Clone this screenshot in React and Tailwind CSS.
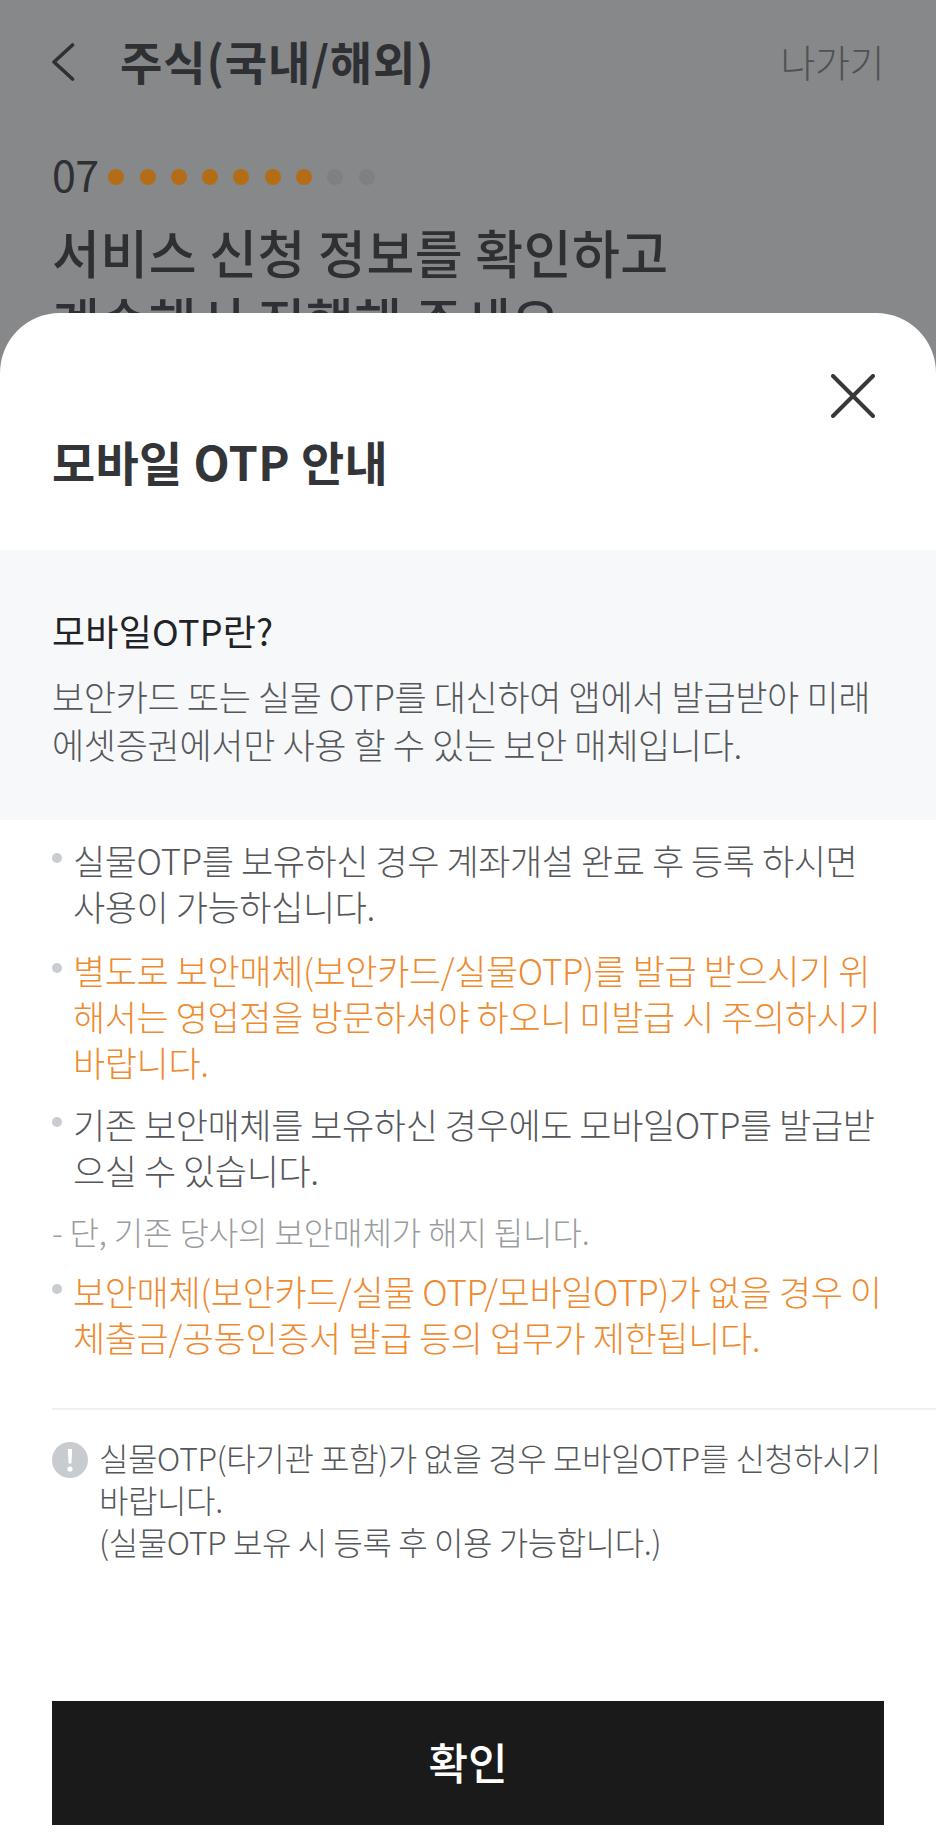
const font = "font-['Noto_Sans_CJK_KR','Noto_Sans',sans-serif]";

function Dot({ on }) {
  return <span className={`h-4 w-4 rounded-full ${on ? "bg-[#b46d17]" : "bg-[#7f8082]"}`} />;
}

function Bullet({ orange, children, className = "" }) {
  return (
    <div className={`flex ${className}`}>
      <span className="mt-[16px] mr-[11px] h-[10px] w-[10px] shrink-0 rounded-full bg-[#c9ccd0]" />
      <p className={`whitespace-nowrap text-[35px] leading-[46px] font-light tracking-[-0.4px] ${orange ? "text-[#ee8a30]" : "text-[#55575b]"}`}>
        {children}
      </p>
    </div>
  );
}

export default function App() {
  return (
    <div className={`relative h-[1847px] w-[936px] overflow-hidden bg-[#87888a] ${font}`}>
      {/* page behind, already dimmed by the sheet */}
      <div className="px-[52px] pt-[34px] text-[#2e3033]">
        <header className="flex h-[56px] items-center justify-between">
          <div className="flex items-center">
            <svg width="24" height="40" viewBox="0 0 24 40" fill="none" stroke="#2e3033" strokeWidth="3.6" strokeLinecap="round" strokeLinejoin="round">
              <path d="M20.5 3 L2 20 L20.5 37" />
            </svg>
            <h1 className="-mt-[4px] ml-[44px] text-[46px] font-bold tracking-[0.9px]">주식(국내/해외)</h1>
          </div>
          <span className="-mt-[4px] text-[38px] font-light tracking-[-0.5px] text-[#505153]">나가기</span>
        </header>
        <div className="mt-[63px] flex h-[46px] items-center">
          <span className="-mt-[6px] text-[43px] tracking-[-0.5px]">07</span>
          <div className="ml-[9.5px] mt-[2px] flex gap-[15.3px]">
            <Dot on /><Dot on /><Dot on /><Dot on /><Dot on /><Dot on /><Dot on /><Dot /><Dot />
          </div>
        </div>
        <h2 className="mt-[19px] text-[52px] leading-[68px] font-medium tracking-[0.5px]">
          서비스 신청 정보를 확인하고<br />계속해서 진행해 주세요
        </h2>
      </div>

      {/* bottom sheet */}
      <section className="absolute inset-x-0 top-[313px] bottom-0 flex flex-col rounded-t-[60px] bg-white">
        <div className="flex h-[237px] flex-col px-[52px]">
          <div className="flex justify-end pt-[61px] pr-[9px]">
            <svg width="44" height="44" viewBox="0 0 44 44" fill="none" stroke="#38393b" strokeWidth="4" strokeLinecap="round">
              <path d="M2 2 L42 42 M42 2 L2 42" />
            </svg>
          </div>
          <h2 className="mt-[13px] text-[47px] leading-[60px] font-bold tracking-[0.3px] text-[#333538]">모바일 OTP 안내</h2>
        </div>

        <div className="h-[270px] bg-[#f7f8fa] px-[52px] pt-[56px]">
          <h3 className="text-[36px] leading-[48px] tracking-[0.2px] text-[#222326]">모바일OTP란?</h3>
          <p className="mt-[18px] whitespace-nowrap text-[35px] leading-[48px] font-light tracking-[-0.34px] text-[#55575b]">
            보안카드 또는 실물 OTP를 대신하여 앱에서 발급받아 미래<br />에셋증권에서만 사용 할 수 있는 보안 매체입니다.
          </p>
        </div>

        <div className="px-[52px] pt-[17px]">
          <Bullet>실물OTP를 보유하신 경우 계좌개설 완료 후 등록 하시면<br />사용이 가능하십니다.</Bullet>
          <Bullet orange className="mt-[18px]">별도로 보안매체(보안카드/실물OTP)를 발급 받으시기 위<br />해서는 영업점을 방문하셔야 하오니 미발급 시 주의하시기<br />바랍니다.</Bullet>
          <Bullet className="mt-[16px]">기존 보안매체를 보유하신 경우에도 모바일OTP를 발급받<br />으실 수 있습니다.</Bullet>
          <p className="mt-[17px] text-[32px] leading-[42px] font-light tracking-[-0.1px] text-[#9a9c9f]">- 단, 기존 당사의 보안매체가 해지 됩니다.</p>
          <Bullet orange className="mt-[16px]">보안매체(보안카드/실물 OTP/모바일OTP)가 없을 경우 이<br />체출금/공동인증서 발급 등의 업무가 제한됩니다.</Bullet>
        </div>

        <div className="mt-[48px] ml-[52px] border-t-2 border-[#f0f1f3] pt-[27px] pr-[52px]">
          <div className="flex">
            <svg className="mt-[5px] shrink-0" width="36" height="36" viewBox="0 0 36 36">
              <circle cx="18" cy="18" r="18" fill="#c8ccd1" />
              <path d="M15.8 7 H20.2 L19.4 21.5 H16.6 Z" fill="#fff" />
              <circle cx="18" cy="27" r="2.6" fill="#fff" />
            </svg>
            <p className="ml-[11px] -mt-[1px] whitespace-nowrap text-[32px] leading-[42px] font-light tracking-[-0.4px] text-[#55575b]">
              실물OTP(타기관 포함)가 없을 경우 모바일OTP를 신청하시기<br />바랍니다.<br />(실물OTP 보유 시 등록 후 이용 가능합니다.)
            </p>
          </div>
        </div>

        <div className="mt-auto px-[52px] pb-[22px]">
          <button className="flex h-[124px] w-full items-center justify-center bg-[#1a1a1a] pb-[4px] text-[43px] font-medium text-white">확인</button>
        </div>
      </section>
    </div>
  );
}
